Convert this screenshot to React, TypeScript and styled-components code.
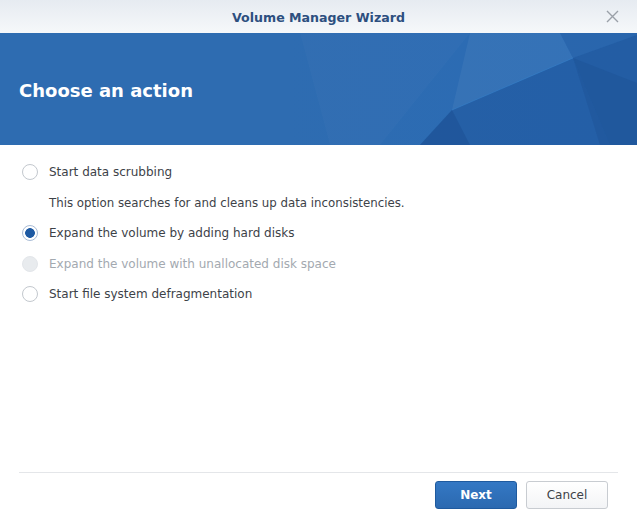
import React, { useState } from 'react';
import styled, { createGlobalStyle } from 'styled-components';

const GlobalStyle = createGlobalStyle`
  html, body {
    margin: 0;
    padding: 0;
    background: #ffffff;
  }
  body {
    font-family: 'DejaVu Sans', Verdana, sans-serif;
  }
  * {
    box-sizing: border-box;
  }
`;

const options = [
  { id: 'scrub', label: 'Start data scrubbing', note: 'This option searches for and cleans up data inconsistencies.' },
  { id: 'expand', label: 'Expand the volume by adding hard disks' },
  { id: 'unalloc', label: 'Expand the volume with unallocated disk space', disabled: true },
  { id: 'defrag', label: 'Start file system defragmentation' },
];

export default function App() {
  const [selected, setSelected] = useState('expand');

  return (
    <>
      <GlobalStyle />
      <Window>
        <TitleBar>
          <Title>Volume Manager Wizard</Title>
          <CloseButton aria-label="Close">
            <svg width="13" height="13" viewBox="0 0 13 13">
              <path d="M1 1L12 12M12 1L1 12" stroke="#9aa0a8" strokeWidth="1.4" />
            </svg>
          </CloseButton>
        </TitleBar>
        <Banner>
          <BannerArt viewBox="0 0 637 112" preserveAspectRatio="none">
            <polygon points="300,0 470,0 380,112 330,112" fill="#ffffff" opacity="0.02" />
            <polygon points="470,0 560,0 573,25 452,77" fill="#ffffff" opacity="0.05" />
            <polygon points="560,0 637,0 637,2 573,25" fill="#2a63a8" opacity="0.6" />
            <polygon points="573,25 637,2 637,112 610,112" fill="#1c4f93" opacity="0.5" />
            <polygon points="452,77 573,25 610,112 420,112" fill="#1d5196" opacity="0.45" />
            <polygon points="420,112 452,77 470,112" fill="#16478a" opacity="0.35" />
            <polygon points="573,25 637,50 637,112 600,112" fill="#1b4d90" opacity="0.3" />
            <line x1="452" y1="77" x2="573" y2="25" stroke="#3c8ad4" strokeWidth="1" opacity="0.45" />
          </BannerArt>
          <BannerTitle>Choose an action</BannerTitle>
        </Banner>
        <Body>
          <OptionList>
            {options.map((o) => (
              <OptionGroup key={o.id}>
                <OptionRow
                  $disabled={o.disabled}
                  onClick={() => !o.disabled && setSelected(o.id)}
                >
                  <Radio $checked={selected === o.id} $disabled={o.disabled} />
                  <OptionLabel $disabled={o.disabled}>{o.label}</OptionLabel>
                </OptionRow>
                {o.note && <Note>{o.note}</Note>}
              </OptionGroup>
            ))}
          </OptionList>
        </Body>
        <Footer>
          <PrimaryButton>Next</PrimaryButton>
          <SecondaryButton>Cancel</SecondaryButton>
        </Footer>
      </Window>
    </>
  );
}

const Window = styled.div`
  width: 637px;
  height: 516px;
  display: flex;
  flex-direction: column;
  background: #ffffff;
  overflow: hidden;
`;

const TitleBar = styled.div`
  position: relative;
  height: 33px;
  flex-shrink: 0;
  display: flex;
  align-items: center;
  justify-content: center;
  background: linear-gradient(#e6ebf1, #f6f8fa);
`;

const Title = styled.div`
  font-size: 12.6px;
  font-weight: bold;
  color: #2d4f7f;
  padding-top: 1px;
`;

const CloseButton = styled.div`
  position: absolute;
  right: 18px;
  top: 10px;
  width: 13px;
  height: 13px;
  display: flex;
  cursor: pointer;
`;

const Banner = styled.div`
  position: relative;
  height: 112px;
  flex-shrink: 0;
  display: flex;
  align-items: center;
  padding-left: 19px;
  background: linear-gradient(90deg, #2e6cb1 0%, #2e6cb1 45%, #2a6bb5 100%);
  overflow: hidden;
`;

const BannerArt = styled.svg`
  position: absolute;
  inset: 0;
  width: 100%;
  height: 100%;
`;

const BannerTitle = styled.h1`
  position: relative;
  margin: 0;
  padding-top: 2px;
  font-size: 18px;
  font-weight: bold;
  color: #ffffff;
`;

const Body = styled.div`
  flex: 1;
  padding: 19px 22px 0;
`;

const OptionList = styled.div`
  display: flex;
  flex-direction: column;
  gap: 14.5px;
`;

const OptionGroup = styled.div`
  display: flex;
  flex-direction: column;
  gap: 14.5px;
`;

const OptionRow = styled.label<{ $disabled?: boolean }>`
  display: flex;
  align-items: center;
  gap: 11px;
  cursor: ${(p) => (p.$disabled ? 'default' : 'pointer')};
`;

const Radio = styled.span<{ $checked?: boolean; $disabled?: boolean }>`
  width: 16px;
  height: 16px;
  border-radius: 50%;
  flex-shrink: 0;
  border: 1px solid ${(p) => (p.$disabled ? '#e3e6ea' : p.$checked ? '#a9bcd6' : '#c3c8ce')};
  background: ${(p) =>
    p.$disabled
      ? '#e8ebee'
      : p.$checked
      ? 'radial-gradient(circle, #1e5aa3 0 4.5px, #ffffff 5.2px)'
      : '#ffffff'};
`;

const OptionLabel = styled.span<{ $disabled?: boolean }>`
  font-size: 12px;
  line-height: 16px;
  color: ${(p) => (p.$disabled ? '#a3a9b0' : '#3d4248')};
`;

const Note = styled.div`
  padding-left: 27px;
  font-size: 11.8px;
  line-height: 16px;
  color: #3d4248;
`;

const Footer = styled.div`
  flex-shrink: 0;
  margin: 0 19px;
  height: 44px;
  border-top: 1px solid #e4e6e9;
  display: flex;
  align-items: flex-start;
  justify-content: flex-end;
  gap: 9px;
  padding-top: 8px;
  padding-right: 10px;
`;

const BaseButton = styled.button`
  width: 82px;
  height: 28px;
  border-radius: 3px;
  font-family: 'DejaVu Sans', Verdana, sans-serif;
  font-size: 12px;
  cursor: pointer;
`;

const PrimaryButton = styled(BaseButton)`
  border: 1px solid #1f5a9e;
  background: linear-gradient(#3478c4, #2b69b0);
  color: #ffffff;
  font-weight: bold;
`;

const SecondaryButton = styled(BaseButton)`
  border: 1px solid #c8ccd1;
  background: linear-gradient(#ffffff, #f3f4f6);
  color: #3d4248;
`;
